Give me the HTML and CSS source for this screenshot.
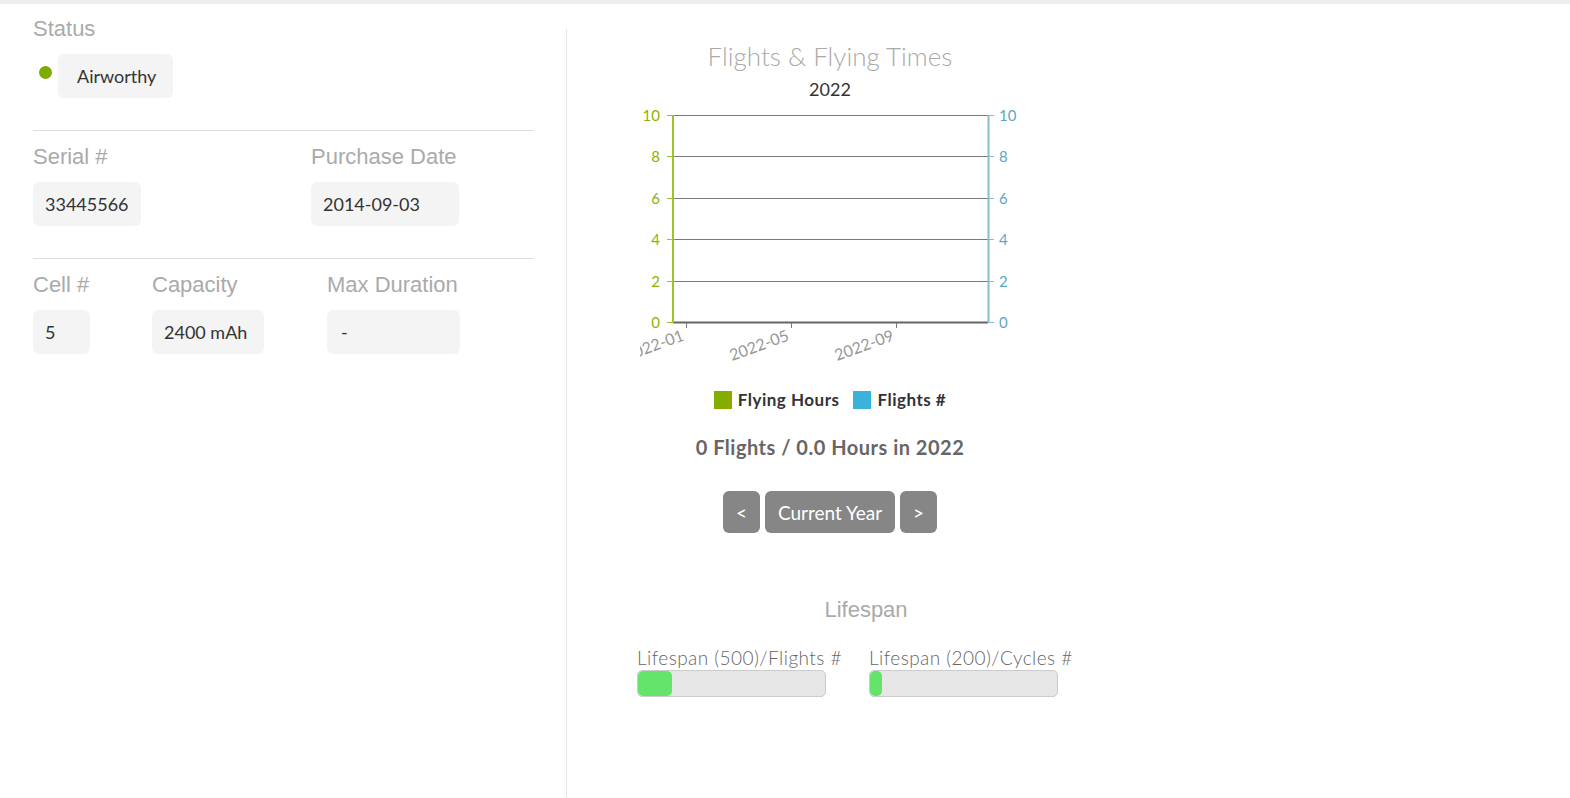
FILE: index.html
```html
<!DOCTYPE html>
<html lang="en">
<head>
    <meta charset="UTF-8">
    <meta name="viewport" content="width=device-width, initial-scale=1.0">
    <title>Battery Details</title>
    <link rel="stylesheet" href="styles.css">
</head>
<body>
    <div class="topbar"></div>
    <div class="page">
        <div class="info">
            <div class="label">Status</div>
            <div class="status-row">
                <span class="dot"></span>
                <span class="value status">Airworthy</span>
            </div>

            <hr class="sep">

            <div class="fields">
                <div class="field serial">
                    <div class="label">Serial #</div>
                    <span class="value">33445566</span>
                </div>
                <div class="field">
                    <div class="label">Purchase Date</div>
                    <span class="value date">2014-09-03</span>
                </div>
            </div>

            <hr class="sep">

            <div class="fields">
                <div class="field cell">
                    <div class="label">Cell #</div>
                    <span class="value">5</span>
                </div>
                <div class="field capacity">
                    <div class="label">Capacity</div>
                    <span class="value">2400 mAh</span>
                </div>
                <div class="field">
                    <div class="label">Max Duration</div>
                    <span class="value wide">-</span>
                </div>
            </div>
        </div>

        <div class="stats">
            <div class="chart-panel">
                <div class="chart-title">Flights &amp; Flying Times</div>
                <div class="chart-year">2022</div>
                <svg class="chart" width="380" height="270" viewBox="0 0 380 270">
                    <g class="grid">
                        <line x1="33" y1="11.5" x2="348" y2="11.5"/>
                        <line x1="33" y1="52.5" x2="348" y2="52.5"/>
                        <line x1="33" y1="94.5" x2="348" y2="94.5"/>
                        <line x1="33" y1="135.5" x2="348" y2="135.5"/>
                        <line x1="33" y1="177.5" x2="348" y2="177.5"/>
                    </g>
                    <line class="baseline" x1="33" y1="218.5" x2="348" y2="218.5"/>

                    <g class="axis-left">
                        <line x1="33" y1="11" x2="33" y2="219"/>
                        <line x1="27" y1="11.5" x2="33" y2="11.5"/>
                        <line x1="27" y1="52.5" x2="33" y2="52.5"/>
                        <line x1="27" y1="94.5" x2="33" y2="94.5"/>
                        <line x1="27" y1="135.5" x2="33" y2="135.5"/>
                        <line x1="27" y1="177.5" x2="33" y2="177.5"/>
                        <line x1="27" y1="218.5" x2="33" y2="218.5"/>
                    </g>
                    <g class="ticks-left">
                        <text x="20" y="16.5">10</text>
                        <text x="20" y="57.5">8</text>
                        <text x="20" y="99.5">6</text>
                        <text x="20" y="140.5">4</text>
                        <text x="20" y="182.5">2</text>
                        <text x="20" y="223.5">0</text>
                    </g>

                    <g class="axis-right">
                        <line x1="348.5" y1="11" x2="348.5" y2="219"/>
                        <line x1="348" y1="11.5" x2="354" y2="11.5"/>
                        <line x1="348" y1="52.5" x2="354" y2="52.5"/>
                        <line x1="348" y1="94.5" x2="354" y2="94.5"/>
                        <line x1="348" y1="135.5" x2="354" y2="135.5"/>
                        <line x1="348" y1="177.5" x2="354" y2="177.5"/>
                        <line x1="348" y1="218.5" x2="354" y2="218.5"/>
                    </g>
                    <g class="ticks-right">
                        <text x="359" y="16.5">10</text>
                        <text x="359" y="57.5">8</text>
                        <text x="359" y="99.5">6</text>
                        <text x="359" y="140.5">4</text>
                        <text x="359" y="182.5">2</text>
                        <text x="359" y="223.5">0</text>
                    </g>

                    <g class="x-ticks">
                        <line x1="46.5" y1="219" x2="46.5" y2="224"/>
                        <line x1="151.5" y1="219" x2="151.5" y2="224"/>
                        <line x1="256.5" y1="219" x2="256.5" y2="224"/>
                    </g>
                    <g class="x-labels">
                        <text x="45" y="236" transform="rotate(-20 45 236)">2022-01</text>
                        <text x="150" y="236" transform="rotate(-20 150 236)">2022-05</text>
                        <text x="255" y="236" transform="rotate(-20 255 236)">2022-09</text>
                    </g>
                </svg>

                <div class="legend">
                    <span class="legend-item"><span class="swatch hours"></span>Flying Hours</span>
                    <span class="legend-item"><span class="swatch flights"></span>Flights #</span>
                </div>

                <div class="summary">0 Flights / 0.0 Hours in 2022</div>

                <div class="year-nav">
                    <button class="btn">&lt;</button>
                    <button class="btn">Current Year</button>
                    <button class="btn">&gt;</button>
                </div>
            </div>

            <div class="lifespan">
                <div class="lifespan-title">Lifespan</div>
                <div class="meters">
                    <div class="meter">
                        <div class="meter-label">Lifespan (500)/Flights #</div>
                        <div class="bar"><div class="fill" style="width: 34px"></div></div>
                    </div>
                    <div class="meter">
                        <div class="meter-label">Lifespan (200)/Cycles #</div>
                        <div class="bar"><div class="fill" style="width: 12px"></div></div>
                    </div>
                </div>
            </div>
        </div>
    </div>
</body>
</html>
```

FILE: styles.css
```css
body {
    margin: 0;
    padding: 0;
    background: #fff;
    font-family: Lato, "Noto Sans", sans-serif;
}

.topbar {
    height: 4px;
    background: #eeeeee;
}

.page {
    display: flex;
    height: 794px;
}

/* left column */

.info {
    width: 501px;
    margin-left: 33px;
    margin-right: 32px;
    padding-top: 12px;
}

.label {
    font-family: "Liberation Sans", Arial, sans-serif;
    font-size: 22px;
    line-height: 25px;
    color: #aaaaaa;
}

.status-row {
    display: flex;
    align-items: flex-start;
    margin-top: 13px;
}

.dot {
    width: 13px;
    height: 13px;
    border-radius: 50%;
    background: #7dab00;
    margin: 12px 6px 0 6px;
}

.value {
    display: inline-block;
    box-sizing: border-box;
    height: 44px;
    padding: 0 12px 0 12px;
    border-radius: 6px;
    background: #f4f4f4;
    color: #333;
    font-size: 18px;
    line-height: 44px;
}

.value.status {
    width: 115px;
    padding: 0 12px 0 19px;
}

.sep {
    border: 0;
    border-top: 1px solid #dddddd;
    margin: 32px 0 13px;
}

.fields {
    display: flex;
}

.field .label {
    margin-bottom: 13px;
}

.serial { width: 278px; }
.cell { width: 119px; }
.capacity { width: 175px; }

.cell .value { width: 57px; }
.capacity .value { width: 112px; }
.field .date { width: 148px; }
.field .wide { width: 133px; padding-left: 14px; }

/* right column */

.stats {
    flex: 1;
    margin-top: 25px;
    border-left: 1px solid #e6e6e6;
}

.chart-panel {
    width: 420px;
    margin-left: 53px;
    display: flex;
    flex-direction: column;
    align-items: center;
}

.chart-title {
    margin-top: 12px;
    font-size: 26px;
    font-weight: 300;
    line-height: 30px;
    color: #aaaaaa;
}

.chart-year {
    margin-top: 7px;
    font-size: 18px;
    line-height: 22px;
    color: #333;
}

.chart {
    display: block;
    align-self: flex-start;
    margin: 4px 0 0 20px;
    font-family: Lato, "Noto Sans", sans-serif;
    font-size: 15px;
}

.chart .grid line { stroke: #7a7a7a; stroke-width: 1; }
.chart .baseline { stroke: #666; stroke-width: 2; }
.chart .axis-left line { stroke: #9cc429; stroke-width: 2; }
.chart .axis-right line { stroke: #86bdd1; stroke-width: 2; }
.chart .axis-left line + line,
.chart .axis-right line + line { stroke-width: 1; }
.chart .x-ticks line { stroke: #777; stroke-width: 1; }
.chart .ticks-left text { fill: #8db300; text-anchor: end; }
.chart .ticks-right text { fill: #5fa6c3; }
.chart .x-labels text { fill: #999; text-anchor: end; font-size: 16px; }

.legend {
    display: flex;
    gap: 14px;
    margin-top: 15px;
}

.legend-item {
    display: flex;
    align-items: center;
    font-size: 17px;
    font-weight: 700;
    letter-spacing: 0.5px;
    color: #333;
}

.swatch {
    width: 18px;
    height: 18px;
    margin-right: 6px;
}

.swatch.hours { background: #84ad00; }
.swatch.flights { background: #3bb2dc; }

.summary {
    margin-top: 25px;
    font-size: 20px;
    font-weight: 700;
    letter-spacing: 0.5px;
    color: #666;
}

.year-nav {
    display: flex;
    gap: 5px;
    margin-top: 32px;
}

.btn {
    height: 42px;
    padding: 0 13px;
    border: 0;
    border-radius: 6px;
    background: #868686;
    color: #fff;
    font-family: Lato, "Noto Sans", sans-serif;
    font-size: 19px;
}

.lifespan {
    width: 598px;
    margin-top: 64px;
}

.lifespan-title {
    text-align: center;
    font-family: "Liberation Sans", Arial, sans-serif;
    font-size: 22px;
    line-height: 26px;
    color: #aaaaaa;
}

.meters {
    display: flex;
    gap: 43px;
    margin: 24px 0 0 70px;
}

.meter {
    width: 189px;
}

.meter-label {
    font-size: 19px;
    font-weight: 300;
    letter-spacing: 0.45px;
    line-height: 22px;
    color: #666;
    white-space: nowrap;
}

.bar {
    height: 25px;
    margin-top: 1px;
    border: 1px solid #cccccc;
    border-radius: 5px;
    background: #e6e6e6;
    overflow: hidden;
}

.fill {
    height: 100%;
    border-radius: 5px;
    background: #64e46a;
}
```
